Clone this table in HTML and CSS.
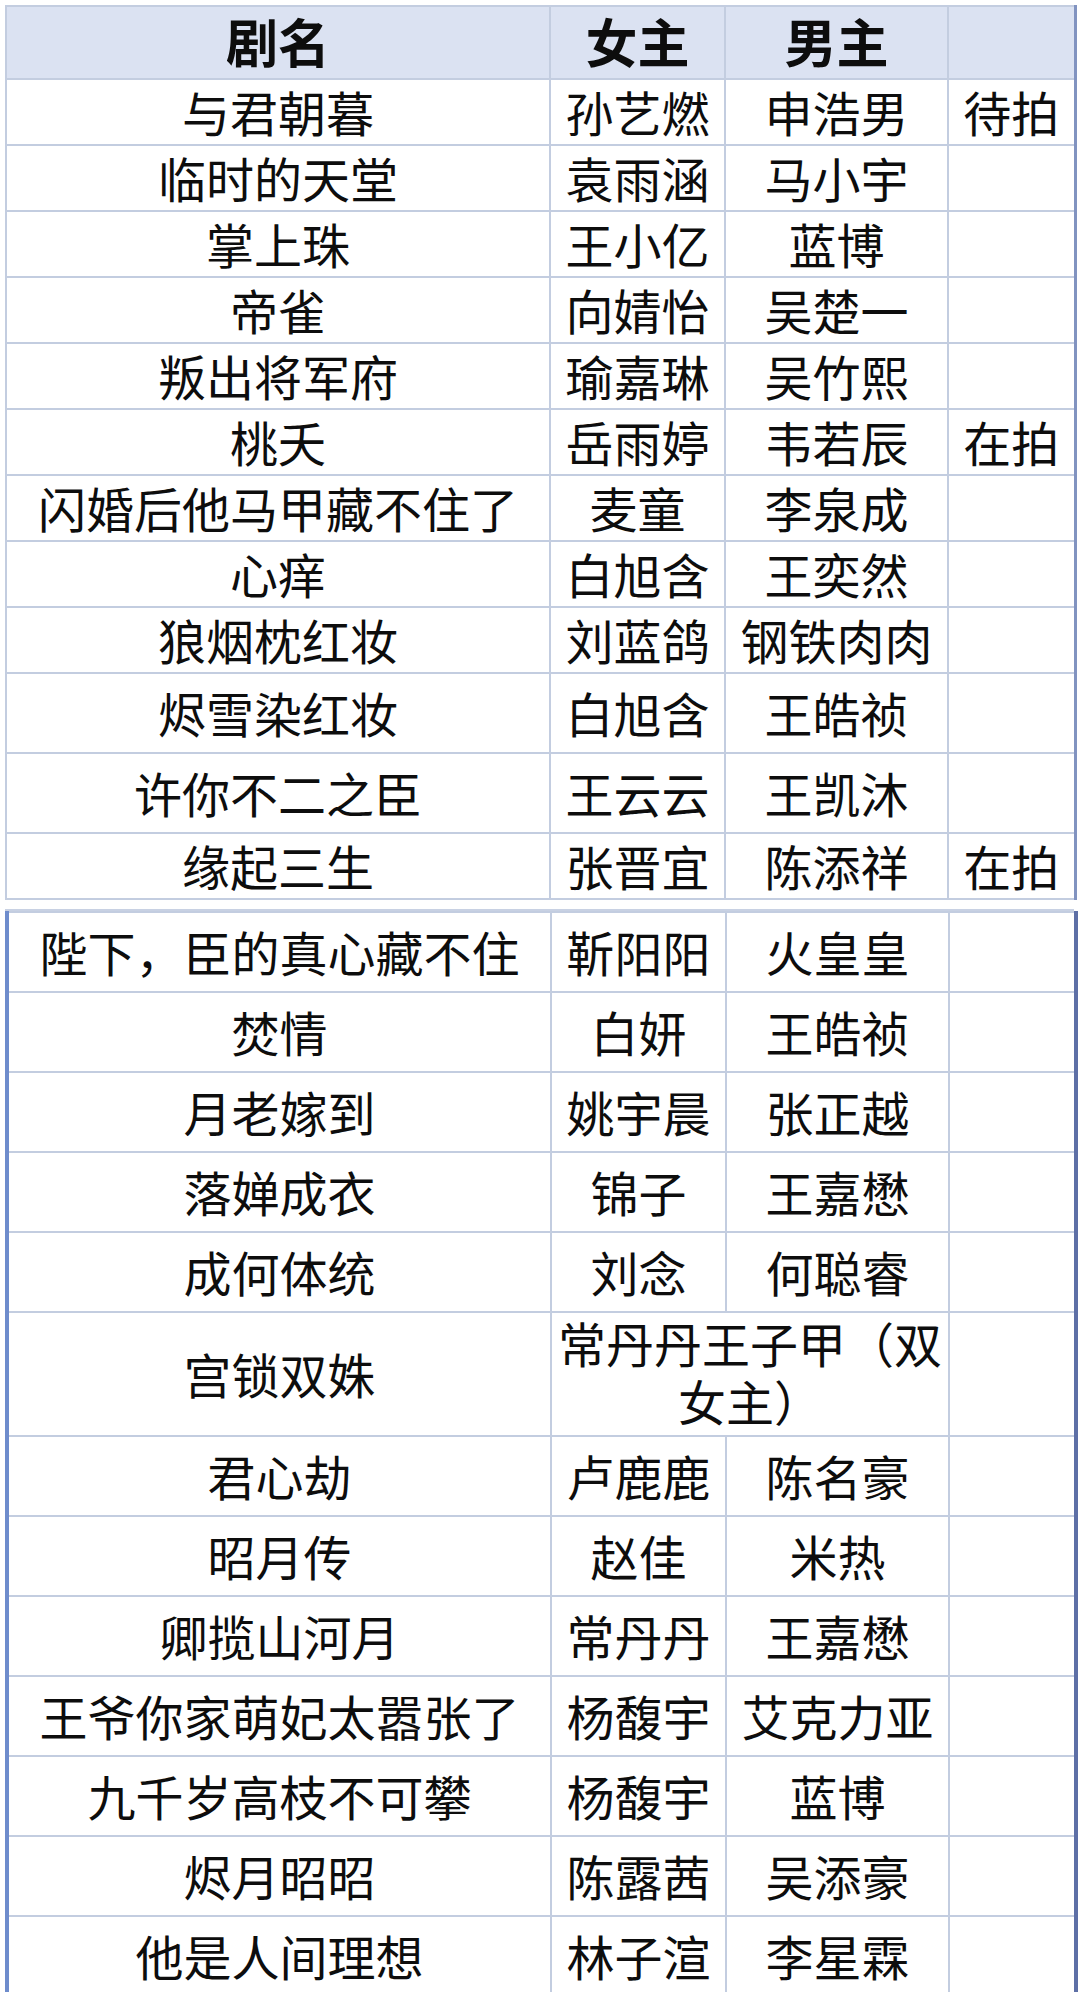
FILE: index.html
```html
<!DOCTYPE html>
<html lang="zh">
<head>
<meta charset="utf-8">
<title>剧名表</title>
<link rel="stylesheet" href="styles.css">
</head>
<body>
<div class="page">
  <table class="sheet sheet-top">
    <colgroup><col class="c1"><col class="c2"><col class="c3"><col class="c4"></colgroup>
    <thead>
      <tr class="head"><th>剧名</th><th>女主</th><th>男主</th><th></th></tr>
    </thead>
    <tbody>
      <tr><td>与君朝暮</td><td>孙艺燃</td><td>申浩男</td><td>待拍</td></tr>
      <tr><td>临时的天堂</td><td>袁雨涵</td><td>马小宇</td><td></td></tr>
      <tr><td>掌上珠</td><td>王小亿</td><td>蓝博</td><td></td></tr>
      <tr><td>帝雀</td><td>向婧怡</td><td>吴楚一</td><td></td></tr>
      <tr><td>叛出将军府</td><td>瑜嘉琳</td><td>吴竹熙</td><td></td></tr>
      <tr><td>桃夭</td><td>岳雨婷</td><td>韦若辰</td><td>在拍</td></tr>
      <tr><td>闪婚后他马甲藏不住了</td><td>麦童</td><td>李泉成</td><td></td></tr>
      <tr><td>心痒</td><td>白旭含</td><td>王奕然</td><td></td></tr>
      <tr><td>狼烟枕红妆</td><td>刘蓝鸽</td><td>钢铁肉肉</td><td></td></tr>
      <tr class="tall"><td>烬雪染红妆</td><td>白旭含</td><td>王皓祯</td><td></td></tr>
      <tr class="tall"><td>许你不二之臣</td><td>王云云</td><td>王凯沐</td><td></td></tr>
      <tr><td>缘起三生</td><td>张晋宜</td><td>陈添祥</td><td>在拍</td></tr>
    </tbody>
  </table>
  <div class="seam"></div>
  <table class="sheet sheet-bottom">
    <colgroup><col class="c1"><col class="c2"><col class="c3"><col class="c4"></colgroup>
    <tbody>
      <tr><td>陛下，臣的真心藏不住</td><td>靳阳阳</td><td>火皇皇</td><td></td></tr>
      <tr><td>焚情</td><td>白妍</td><td>王皓祯</td><td></td></tr>
      <tr><td>月老嫁到</td><td>姚宇晨</td><td>张正越</td><td></td></tr>
      <tr><td>落婵成衣</td><td>锦子</td><td>王嘉懋</td><td></td></tr>
      <tr><td>成何体统</td><td>刘念</td><td>何聪睿</td><td></td></tr>
      <tr class="wide"><td>宫锁双姝</td><td colspan="2" class="wrap">常丹丹王子甲（双女主）</td><td></td></tr>
      <tr><td>君心劫</td><td>卢鹿鹿</td><td>陈名豪</td><td></td></tr>
      <tr><td>昭月传</td><td>赵佳</td><td>米热</td><td></td></tr>
      <tr><td>卿揽山河月</td><td>常丹丹</td><td>王嘉懋</td><td></td></tr>
      <tr><td>王爷你家萌妃太嚣张了</td><td>杨馥宇</td><td>艾克力亚</td><td></td></tr>
      <tr><td>九千岁高枝不可攀</td><td>杨馥宇</td><td>蓝博</td><td></td></tr>
      <tr><td>烬月昭昭</td><td>陈露茜</td><td>吴添豪</td><td></td></tr>
      <tr><td>他是人间理想</td><td>林子渲</td><td>李星霖</td><td></td></tr>
    </tbody>
  </table>
</div>
</body>
</html>
```
FILE: styles.css
```css
* { box-sizing: border-box; }
html, body {
  margin: 0;
  padding: 0;
  background: #ffffff;
}
body {
  width: 1080px;
  height: 1992px;
  overflow: hidden;
  font-family: "Noto Sans CJK SC", "Noto Sans", sans-serif;
  color: #0d0d0d;
}
.page {
  padding: 5px 6px 0 5px;
}
.sheet {
  width: 1069px;
  border-collapse: collapse;
  table-layout: fixed;
}
.c1 { width: 544px; }
.c2 { width: 175px; }
.c3 { width: 223px; }
.c4 { width: 127px; }

.sheet th,
.sheet td {
  padding: 0 0 3px;
  text-align: center;
  vertical-align: middle;
  white-space: nowrap;
  border: 2px solid #c3cde0;
  font-size: 48px;
  font-weight: 400;
  line-height: 1;
}
.sheet-top {
  border-left: 2px solid #a9b6d1;
  border-right: 3px solid #8193c0;
  border-top: 2px solid #8ea0c8;
}
.head th {
  height: 73px;
  background: #dbe2f2;
  font-weight: 700;
  font-size: 52px;
}
.sheet-top tbody tr { height: 66px; }
.sheet-top tbody tr.tall { height: 80px; }

.seam {
  height: 11px;
  border-bottom: 2px solid #c8d1e3;
}
.sheet-bottom {
  border-left: 4px solid #6e8ccc;
  border-right: 4px solid #5d6fa6;
}
.sheet-bottom tr { height: 80px; }
.sheet-bottom tr.wide { height: 124px; }
.sheet-bottom td.wrap {
  white-space: normal;
  line-height: 1.2;
  padding: 0 4px 4px;
}
```
